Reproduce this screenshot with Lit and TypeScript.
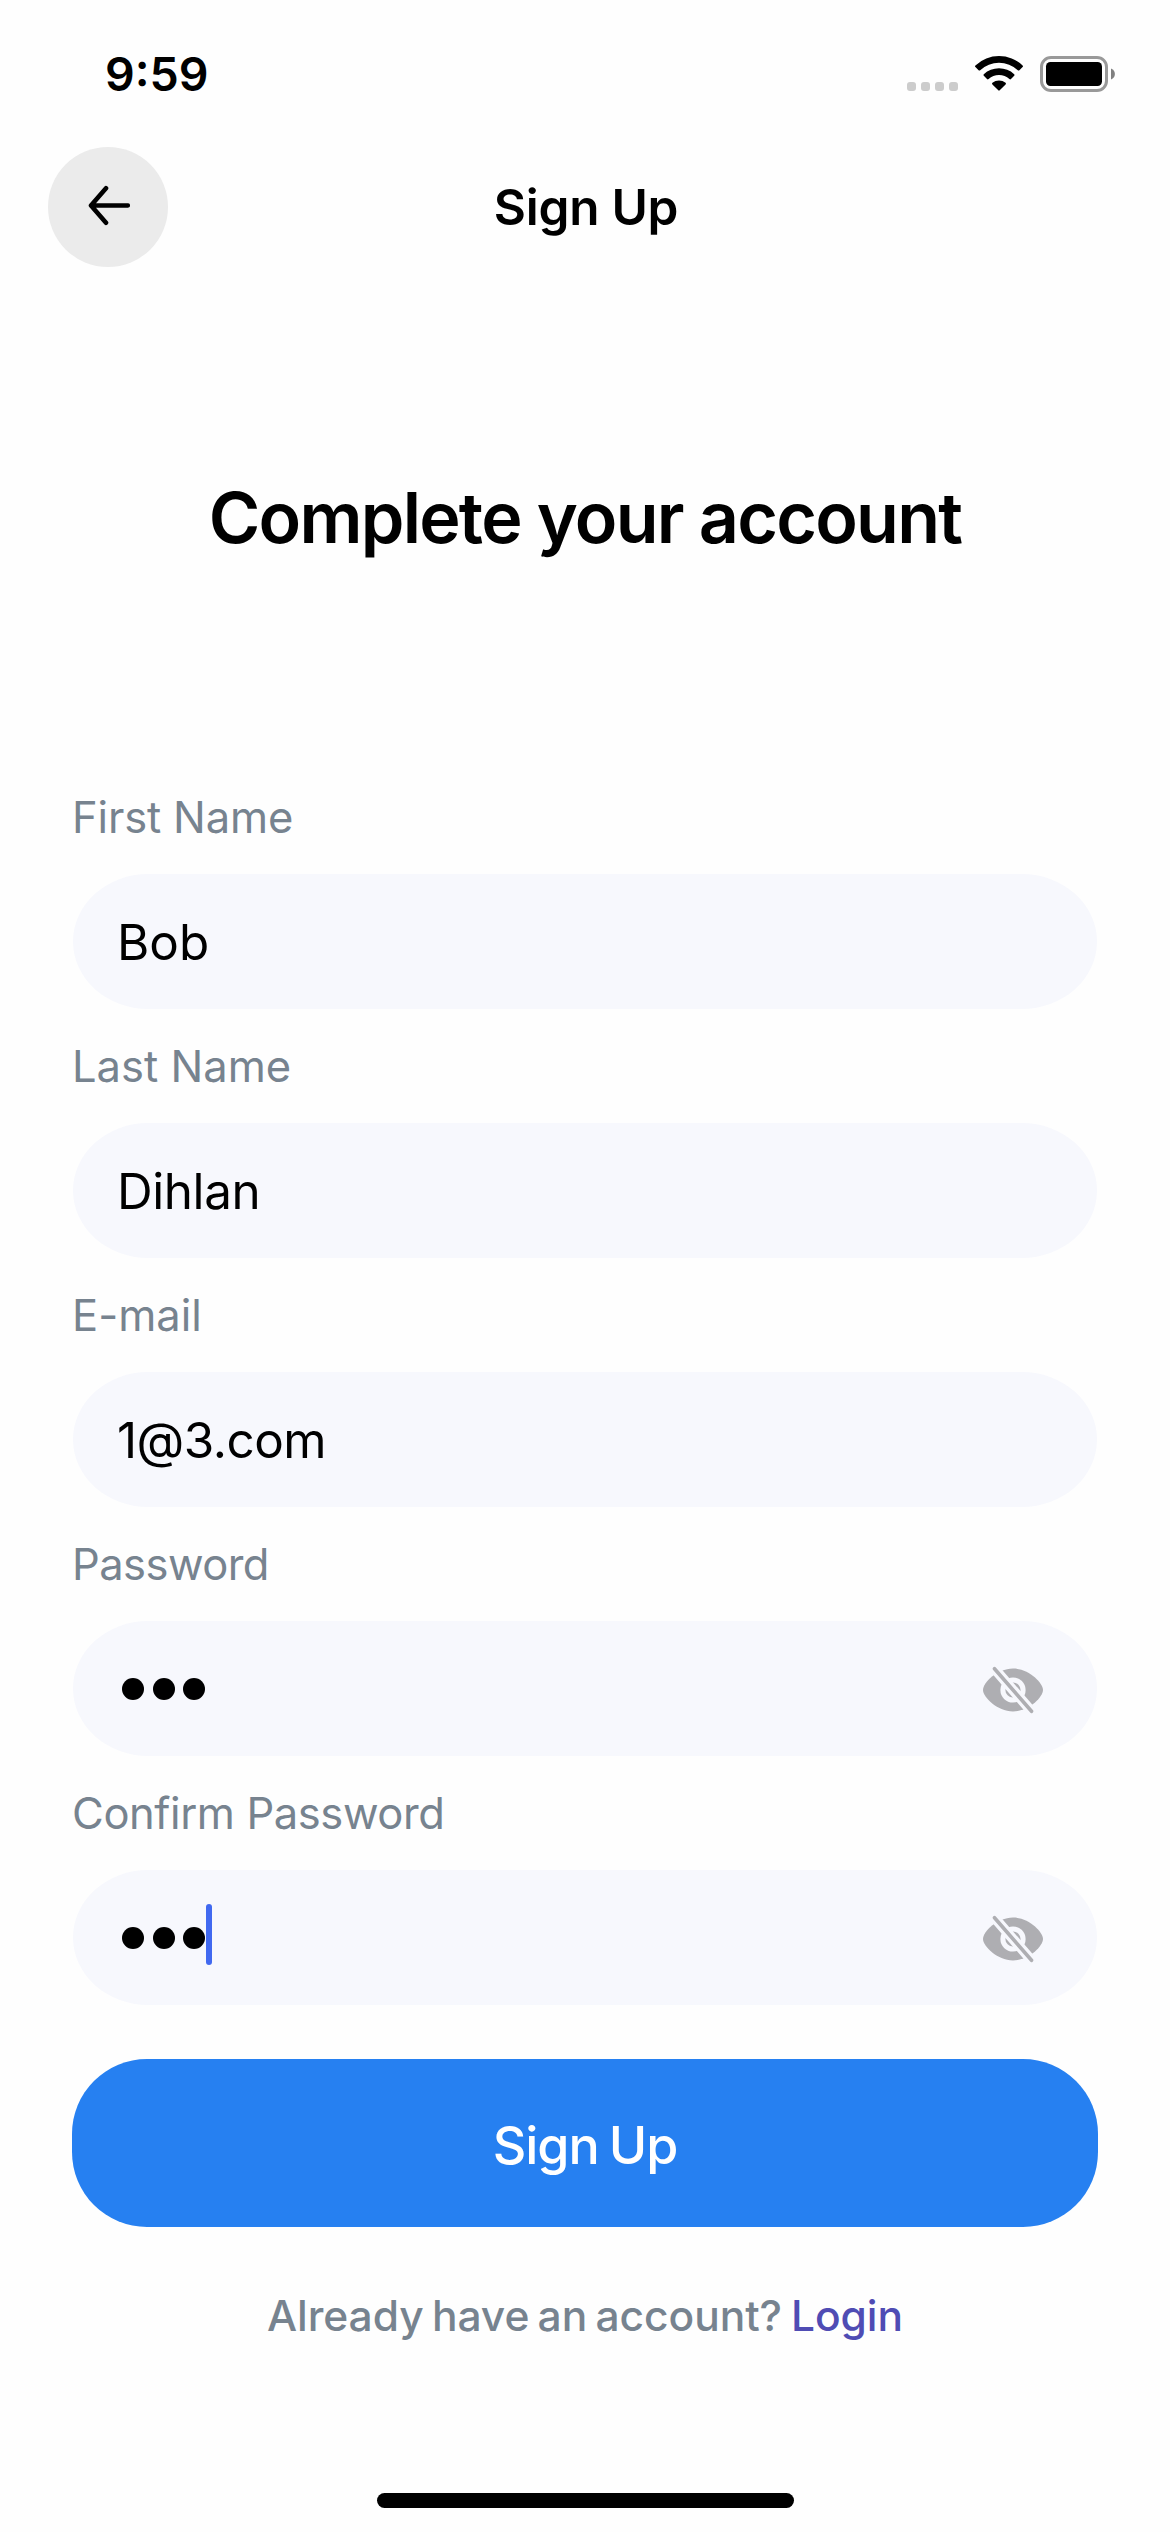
import { LitElement, html, css, svg, nothing } from "lit";
import { customElement, property } from "lit/decorators.js";

const backArrow = html`<svg class="arrow" viewBox="0 0 44 44" width="44" height="44">
  <path d="M41.8 20.5H5.5M20 3.2L5 20.5L20 37.8" fill="none" stroke="#000" stroke-width="4.6" stroke-linecap="round" stroke-linejoin="round" />
</svg>`;

const wifi = html`<svg class="wifi" viewBox="0 0 48 36" width="48" height="36">
  <path d="M0.4 10.4A34.4 34.4 0 0 1 47.6 10.4Q48.4 11.2 47.6 12L44.4 15.2Q43.6 16 42.8 15.2A27.6 27.6 0 0 0 5.2 15.2Q4.4 16 3.6 15.2L0.4 12Q-0.4 11.2 0.4 10.4Z" />
  <path d="M8.8 19.2A22.4 22.4 0 0 1 39.2 19.2Q40 20 39.2 20.8L36 24Q35.2 24.8 34.4 24A15.6 15.6 0 0 0 13.6 24Q12.8 24.8 12 24L8.8 20.8Q8 20 8.8 19.2Z" />
  <path d="M17.4 27.8A10.4 10.4 0 0 1 30.6 27.8Q31.4 28.6 30.6 29.4L24.7 35.3Q24 36 23.3 35.3L17.4 29.4Q16.6 28.6 17.4 27.8Z" />
</svg>`;

const battery = html`<svg class="battery" viewBox="0 0 76 36" width="76" height="36">
  <rect x="1.5" y="1.5" width="65" height="33" rx="9.5" fill="none" stroke="#999" stroke-width="3" />
  <rect x="6" y="6" width="56" height="24" rx="4.5" />
  <path d="M71 12.5C76.2 14.5 76.2 21.5 71 23.5Z" fill="#808080" />
</svg>`;

const eyeOff = (id: string) => html`<svg class="eye" viewBox="0 0 60 48" width="60" height="48">
  ${svg`<mask id=${id}>
    <rect width="60" height="48" fill="#fff" />
    <circle cx="30" cy="24" r="12.6" fill="#000" />
    <circle cx="30" cy="24" r="7.6" fill="#fff" />
    <path d="M11.5 2.7L48.5 45.3" stroke="#000" stroke-width="10" stroke-linecap="round" />
  </mask>`}
  <path mask="url(#${id})" fill="#aeaeb2" d="M30 2.6C46 2.6 60 17 60 24S46 45.4 30 45.4S0 31 0 24S14 2.6 30 2.6Z" />
  <path d="M11.5 2.7L48.5 45.3" stroke="#aeaeb2" stroke-width="3.6" stroke-linecap="round" />
</svg>`;

@customElement("form-field")
class FormField extends LitElement {
  @property() label = "";
  @property() value = "";
  @property({ type: Number }) tracking = 0;
  @property({ type: Number }) valueTracking = 0;
  @property({ type: Boolean }) secret = false;
  @property({ type: Boolean }) active = false;

  static styles = css`
    :host { display: flex; flex-direction: column; gap: 27px; }
    .label { height: 60px; line-height: 60px; font-size: 43.5px; color: #77838f; white-space: nowrap; }
    .box { box-sizing: border-box; height: 135px; margin: 0 1px; padding: 1px 54px 0 44px; border-radius: 75px / 67.5px; background: #f7f8fd; display: flex; align-items: center; justify-content: space-between; }
    .value { font-size: 49.4px; color: #000; white-space: nowrap; }
    .dots { display: flex; align-items: center; gap: 8.5px; padding-left: 5px; }
    .dot { width: 22px; height: 22px; border-radius: 50%; background: #000; }
    .caret { width: 6px; height: 61px; border-radius: 3px; background: #4169f0; margin: 0 0 8px -7.5px; }
    .eye { display: block; margin-top: 1px; }
  `;

  render() {
    return html`
      <div class="label" style="letter-spacing:${this.tracking}px">${this.label}</div>
      <div class="box">
        ${this.secret
          ? html`<div class="dots">
                ${[...this.value].map(() => html`<span class="dot"></span>`)}
                ${this.active ? html`<span class="caret"></span>` : nothing}
              </div>
              ${eyeOff("eye-mask")}`
          : html`<div class="value" style="letter-spacing:${this.valueTracking}px">${this.value}</div>`}
      </div>
    `;
  }
}

@customElement("app-root")
class AppRoot extends LitElement {
  static styles = css`
    :host { display: block; font-family: Inter, "Liberation Sans", sans-serif; }
    .screen { box-sizing: border-box; width: 1170px; height: 2532px; background: #fefefe; display: flex; flex-direction: column; overflow: hidden; color: #000; }
    .status { height: 147px; box-sizing: border-box; padding: 0 55px 0 105px; display: flex; justify-content: space-between; align-items: flex-start; }
    .time { padding-top: 44px; line-height: 60px; font-size: 46.5px; font-weight: 600; letter-spacing: 0; }
    .icons { display: flex; align-items: flex-end; padding-top: 55px; }
    .cell { display: flex; gap: 5px; margin-right: 17px; }
    .cell i { width: 9px; height: 9px; border-radius: 3px; background: #ccc; }
    .wifi { display: block; margin-right: 17px; }
    .battery { display: block; margin-bottom: -1px; margin-right: -1px; }
    .header { height: 120px; display: grid; grid-template-columns: 120px 1fr 120px; padding: 0 48px; align-items: center; }
    .back { width: 120px; height: 120px; border-radius: 50%; background: #ebebeb; display: flex; align-items: center; justify-content: center; }
    .arrow { display: block; }
    .title { text-align: center; font-size: 49.5px; font-weight: 600; letter-spacing: -0.25px; padding-left: 2px; }
    .heading { margin: 206px 0 224px; height: 90px; line-height: 90px; text-align: center; font-size: 70px; font-weight: 600; letter-spacing: -1.75px; white-space: nowrap; }
    .form { display: flex; flex-direction: column; gap: 27px; padding: 0 72px; }
    .submit { margin: 54px 72px 0; height: 168px; box-sizing: border-box; padding-top: 4px; border-radius: 75px; background: #2680f1; color: #fff; display: flex; align-items: center; justify-content: center; font-size: 52px; font-weight: 500; letter-spacing: -1px; word-spacing: -3px; }
    .footer { margin-top: 59px; height: 60px; line-height: 60px; display: flex; justify-content: center; gap: 9px; font-size: 42.5px; font-weight: 500; letter-spacing: -0.05px; word-spacing: -3px; color: #77838f; white-space: nowrap; }
    .login { color: #4f4cb4; }
    .home { margin: 147px auto 0; width: 417px; height: 15px; border-radius: 7.5px; background: #000; }
  `;

  render() {
    return html`
      <div class="screen">
        <div class="status">
          <div class="time">9:59</div>
          <div class="icons">
            <div class="cell"><i></i><i></i><i></i><i></i></div>
            ${wifi}${battery}
          </div>
        </div>
        <div class="header">
          <div class="back">${backArrow}</div>
          <div class="title">Sign Up</div>
        </div>
        <div class="heading">Complete your account</div>
        <div class="form">
          <form-field label="First Name" value="Bob" .tracking=${-0.15} .valueTracking=${0}></form-field>
          <form-field label="Last Name" value="Dihlan" .valueTracking=${-0.4}></form-field>
          <form-field label="E-mail" value="1@3.com" .valueTracking=${-0.5}></form-field>
          <form-field label="Password" value="123" secret .tracking=${-0.55}></form-field>
          <form-field label="Confirm Password" value="123" secret active .tracking=${-0.4}></form-field>
        </div>
        <div class="submit">Sign Up</div>
        <div class="footer"><span>Already have an account?</span><span class="login">Login</span></div>
        <div class="home"></div>
      </div>
    `;
  }
}
